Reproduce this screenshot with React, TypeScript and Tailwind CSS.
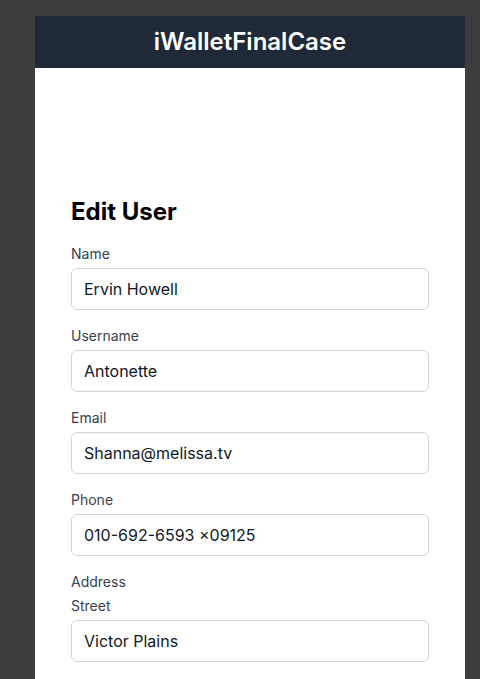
import React from "react";

function Field({ label, value }: { label: string; value: string }) {
  return (
    <div className="mb-4">
      <label className="mb-1 block text-sm font-normal text-[#374151]">{label}</label>
      <input
        readOnly
        value={value}
        className="block h-[42px] w-full rounded-md border border-[#d1d5db] px-3 text-base text-[#111827] outline-none"
      />
    </div>
  );
}

export default function App() {
  return (
    <div
      className="min-h-[679px] bg-[#3d3d3d] pt-4"
      style={{ fontFamily: "Inter, 'Noto Sans', sans-serif" }}
    >
      <div className="ml-[35px] w-[430px] bg-white">
        <header className="bg-[#1f2937] py-2.5 text-center text-2xl font-semibold text-white">
          iWalletFinalCase
        </header>
        <main className="px-9 pb-10 pt-[128px]">
          <h1 className="mb-4 text-2xl font-bold text-black">Edit User</h1>
          <Field label="Name" value="Ervin Howell" />
          <Field label="Username" value="Antonette" />
          <Field label="Email" value="Shanna@melissa.tv" />
          <Field label="Phone" value="010-692-6593 x09125" />
          <div className="mb-1 text-sm font-normal text-[#374151]">Address</div>
          <Field label="Street" value="Victor Plains" />
          <Field label="Suite" value="Suite 879" />
          <Field label="City" value="Wisokyburgh" />
          <Field label="Zipcode" value="90566-7771" />
        </main>
      </div>
    </div>
  );
}
